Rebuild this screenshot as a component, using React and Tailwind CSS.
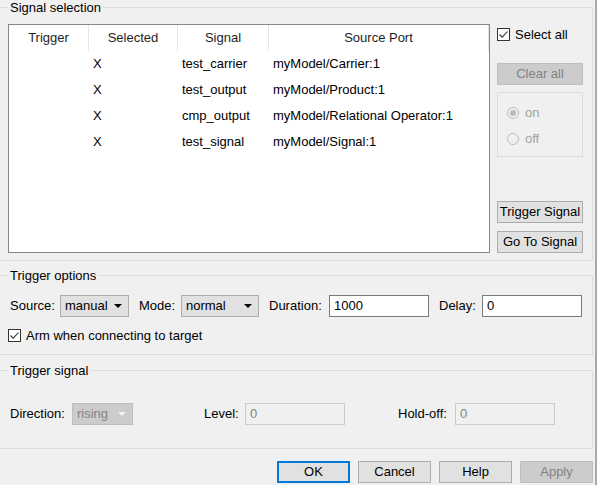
import React from 'react'

const rows = [
  { sel: 'X', signal: 'test_carrier', port: 'myModel/Carrier:1' },
  { sel: 'X', signal: 'test_output', port: 'myModel/Product:1' },
  { sel: 'X', signal: 'cmp_output', port: 'myModel/Relational Operator:1' },
  { sel: 'X', signal: 'test_signal', port: 'myModel/Signal:1' },
]

function CheckBox() {
  return (
    <span className="w-[13px] h-[13px] border border-[#333333] bg-white flex items-center justify-center shrink-0">
      <svg width="11" height="11" viewBox="0 0 11 11">
        <path d="M1.5 5.5 L4.2 8.2 L9.5 2.5" fill="none" stroke="#333333" strokeWidth="1.1" />
      </svg>
    </span>
  )
}

function Radio({ checked, label }) {
  return (
    <div className="flex items-center h-[13px]">
      <span className="ml-[9px] w-[12px] h-[12px] rounded-full border border-[#bcbcbc] bg-[#f0f0f0] flex items-center justify-center">
        {checked && <span className="w-[6px] h-[6px] rounded-full bg-[#bcbcbc]" />}
      </span>
      <span className="ml-[6px] text-[#a0a0a0]">{label}</span>
    </div>
  )
}

function Arrow({ color }) {
  return (
    <svg width="8" height="4" viewBox="0 0 8 4" className="shrink-0">
      <polygon points="0,0 8,0 4,4" fill={color} />
    </svg>
  )
}

function Select({ value, width, disabled }) {
  return (
    <div
      className={`h-[22px] flex items-center justify-between pl-[4px] pr-[6px] border ${
        disabled ? 'bg-[#cccccc] border-[#bfbfbf] text-[#838383]' : 'bg-[#e1e1e1] border-[#adadad] text-black'
      } ${width}`}
    >
      <span>{value}</span>
      <Arrow color={disabled ? '#f4f4f4' : '#000000'} />
    </div>
  )
}

function Input({ value, disabled }) {
  return (
    <div
      className={`w-[100px] h-[22px] flex items-center pl-[4px] border ${
        disabled ? 'border-[#cccccc] bg-[#f0f0f0] text-[#838383]' : 'border-[#7a7a7a] bg-white text-black'
      }`}
    >
      {value}
    </div>
  )
}

function Button({ children, disabled, primary, className = '' }) {
  return (
    <div
      className={`h-[22px] flex items-center justify-center ${
        disabled
          ? 'bg-[#cccccc] border border-[#bfbfbf] text-[#838383]'
          : primary
          ? 'bg-[#e1e1e1] border-2 border-[#0078d7]'
          : 'bg-[#e1e1e1] border border-[#adadad]'
      } ${className}`}
    >
      {children}
    </div>
  )
}

function Group({ title, className = '', children }) {
  return (
    <fieldset className={`-ml-px w-[594px] border border-[#dcdcdc] ${className}`}>
      <legend className="ml-[8px] px-[2px] leading-[15px]">{title}</legend>
      {children}
    </fieldset>
  )
}

export default function App() {
  return (
    <div
      className="w-[597px] h-[485px] overflow-hidden bg-[#f0f0f0] flex text-[13px] text-black"
      style={{ fontFamily: '"Liberation Sans", Arial, sans-serif' }}
    >
      <div className="w-[593px] flex flex-col">
        {/* Signal selection */}
        <Group title="Signal selection" className="pb-[7px]">
          <div className="flex pl-[8px] mt-[9px]">
            <div className="w-[482px] h-[229px] border border-[#828790] bg-white">
              <div className="grid grid-cols-[80px_89px_91px_220px] h-[26px] text-[#1e1e1e]">
                <div className="flex items-center justify-center border-r border-[#e5e5e5]">Trigger</div>
                <div className="flex items-center justify-center border-r border-[#e5e5e5]">Selected</div>
                <div className="flex items-center justify-center border-r border-[#e5e5e5]">Signal</div>
                <div className="flex items-center justify-center border-r border-[#e5e5e5]">Source Port</div>
              </div>
              {rows.map((r) => (
                <div key={r.signal} className="grid grid-cols-[80px_89px_91px_220px] h-[26px] items-center">
                  <div />
                  <div className="pl-[4px]">{r.sel}</div>
                  <div className="pl-[4px]">{r.signal}</div>
                  <div className="pl-[4px]">{r.port}</div>
                </div>
              ))}
            </div>
            <div className="ml-[7px] w-[86px] flex flex-col">
              <div className="flex items-center mt-[4px] h-[13px]">
                <CheckBox />
                <span className="ml-[5px]">Select all</span>
              </div>
              <Button disabled className="mt-[22px]">Clear all</Button>
              <div className="mt-[7px] h-[65px] border border-[#dcdcdc] flex flex-col pt-[13px] gap-[13px]">
                <Radio checked label="on" />
                <Radio label="off" />
              </div>
              <div className="flex-1" />
              <Button>Trigger Signal</Button>
              <Button className="mt-[8px]">Go To Signal</Button>
            </div>
          </div>
        </Group>

        {/* Trigger options */}
        <Group title="Trigger options" className="mt-[7px] pt-[12px] pb-[12px]">
          <div className="flex items-center pl-[10px]">
            <span className="w-[50px]">Source:</span>
            <Select value="manual" width="w-[69px]" />
            <span className="ml-[10px] w-[42px]">Mode:</span>
            <Select value="normal" width="w-[78px]" />
            <span className="ml-[10px] w-[60px]">Duration:</span>
            <Input value="1000" />
            <span className="ml-[10px] w-[43px]">Delay:</span>
            <Input value="0" />
          </div>
          <div className="flex items-center pl-[8px] mt-[12px] h-[13px]">
            <CheckBox />
            <span className="ml-[5px]">Arm when connecting to target</span>
          </div>
        </Group>

        {/* Trigger signal */}
        <Group title="Trigger signal" className="mt-[8px] pt-[25px] pb-[23px]">
          <div className="flex items-center pl-[10px]">
            <span className="w-[62px]">Direction:</span>
            <Select value="rising" width="w-[61px]" disabled />
            <span className="ml-[71px] w-[41px]">Level:</span>
            <Input value="0" disabled />
            <span className="ml-[53px] w-[57px]">Hold-off:</span>
            <Input value="0" disabled />
          </div>
        </Group>

        <div className="flex justify-end gap-[8px] mt-[12px]">
          <Button primary className="w-[73px]">OK</Button>
          <Button className="w-[73px]">Cancel</Button>
          <Button className="w-[73px]">Help</Button>
          <Button disabled className="w-[73px]">Apply</Button>
        </div>
      </div>
      <div className="w-[2px]" />
      <div className="w-[2px] bg-[#a8a8a8]" />
    </div>
  )
}
